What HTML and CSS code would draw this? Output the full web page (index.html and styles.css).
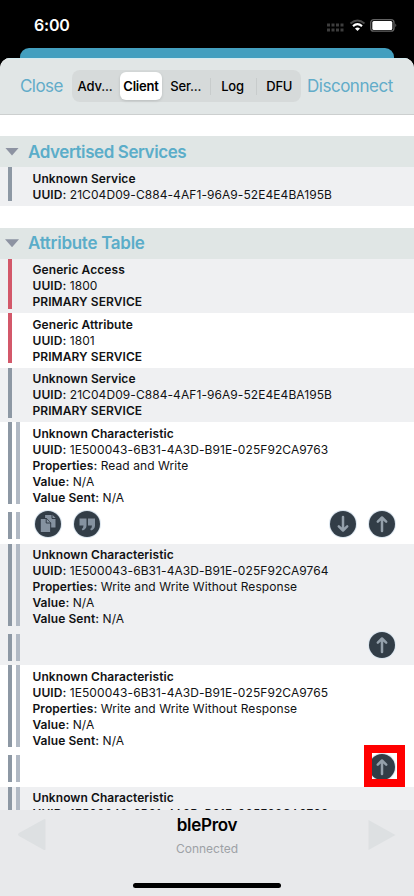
FILE: index.html
```
<!DOCTYPE html>
<html lang="en">
<head>
<meta charset="utf-8">
<meta name="viewport" content="width=device-width, initial-scale=1">
<title>bleProv</title>
<link rel="stylesheet" href="styles.css">
</head>
<body>
<svg class="defs" aria-hidden="true">
  <symbol id="up" viewBox="0 0 26 26"><path d="M13 20V7M8.800 10.700L13 6.500l4.200 4.200"/></symbol>
  <symbol id="down" viewBox="0 0 26 26"><path d="M13 6V19M8.800 15.300L13 19.500l4.200-4.200"/></symbol>
</svg>
<div class="phone">
  <header class="status">
    <span class="time">6:00</span>
    <svg class="indicators" width="72" height="16" viewBox="0 0 72 16">
      <g fill="#3d3d3d"><rect x="0" y="5.500" width="3" height="3"/><rect x="4.500" y="5.500" width="3" height="3"/><rect x="9" y="5.500" width="3" height="3"/><rect x="13.500" y="5.500" width="3" height="3"/><rect x="0" y="10.500" width="3" height="3"/><rect x="4.500" y="10.500" width="3" height="3"/><rect x="9" y="10.500" width="3" height="3"/><rect x="13.500" y="10.500" width="3" height="3"/></g>
      <path d="M23.500 5.500Q30.500-.5 37.500 5.500" fill="none" stroke="#484848" stroke-width="2"/>
      <path d="M26 8.100Q30.500 4.300 35 8.100" fill="none" stroke="#fff" stroke-width="2.200"/>
      <path d="M28 10.500Q30.500 8.500 33 10.500L30.500 13.100Z" fill="#fff"/>
      <rect x="43.700" y="1.700" width="23.300" height="11.500" rx="3" fill="none" stroke="#626262" stroke-width="1.300"/>
      <rect x="45.300" y="3" width="20" height="9" rx="1.500" fill="#fff"/>
      <path d="M68.300 5.500q2 1.800 0 3.500z" fill="#626262"/>
    </svg>
  </header>
  <div class="behind"></div>
  <main class="sheet">
    <nav class="toolbar">
      <span class="link close">Close</span>
      <div class="segments">
        <span class="first">Adv...</span><span class="active">Client</span><span>Ser...</span><span class="divided">Log</span><span class="divided last">DFU</span>
      </div>
      <span class="link disconnect">Disconnect</span>
    </nav>
    <div class="list">
      <h2 class="advertised"><i></i><span>Advertised Services</span></h2>
      <section class="row ad tint"><div class="bars"><i></i></div><div class="text"><p><b>Unknown Service</b></p><p><b>UUID:</b> 21C04D09-C884-4AF1-96A9-52E4E4BA195B</p></div></section>
      <h2 class="attributes"><i></i><span>Attribute Table</span></h2>
      <section class="row service tint red"><div class="bars"><i></i></div><div class="text"><p><b>Generic Access</b></p><p><b>UUID:</b> 1800</p><p><b>PRIMARY SERVICE</b></p></div></section>
      <section class="row service red"><div class="bars"><i></i></div><div class="text"><p><b>Generic Attribute</b></p><p><b>UUID:</b> 1801</p><p><b>PRIMARY SERVICE</b></p></div></section>
      <section class="row service tint"><div class="bars"><i></i></div><div class="text"><p><b>Unknown Service</b></p><p><b>UUID:</b> 21C04D09-C884-4AF1-96A9-52E4E4BA195B</p><p><b>PRIMARY SERVICE</b></p></div></section>
      <section class="row char"><div class="bars"><i></i><i></i><i></i><i></i></div>
        <div class="text"><p><b>Unknown Characteristic</b></p><p><b>UUID:</b> 1E500043-6B31-4A3D-B91E-025F92CA9763</p><p><b>Properties:</b> Read and Write</p><p><b>Value:</b> N/A</p><p><b>Value Sent:</b> N/A</p>
          <div class="actions">
            <svg class="btn" viewBox="0 0 26 26"><g class="solid"><path d="M10 3.500h7l4 4V17H10z"/><path d="M5.500 7.500h6.200l4 4.500V21.500H5.500z"/><path d="M17 3.500v4h4M11.200 7.500V12h4.500"/></g></svg>
            <svg class="btn" viewBox="0 0 26 26"><path class="quote" d="M5.500 7.500h7v7q0 3.500-4 5l-.8-1.500Q9.500 17 9.500 14.500h-4zM14 7.500h7v7q0 3.500-4 5l-.8-1.500Q18 17 18 14.500h-4z"/></svg>
            <svg class="btn first-right"><use href="#down"/></svg>
            <svg class="btn"><use href="#up"/></svg>
          </div></div></section>
      <section class="row char tint"><div class="bars"><i></i><i></i><i></i><i></i></div>
        <div class="text"><p><b>Unknown Characteristic</b></p><p><b>UUID:</b> 1E500043-6B31-4A3D-B91E-025F92CA9764</p><p><b>Properties:</b> Write and Write Without Response</p><p><b>Value:</b> N/A</p><p><b>Value Sent:</b> N/A</p>
          <div class="actions"><svg class="btn first-right"><use href="#up"/></svg></div></div></section>
      <section class="row char"><div class="bars"><i></i><i></i><i></i><i></i></div>
        <div class="text"><p><b>Unknown Characteristic</b></p><p><b>UUID:</b> 1E500043-6B31-4A3D-B91E-025F92CA9765</p><p><b>Properties:</b> Write and Write Without Response</p><p><b>Value:</b> N/A</p><p><b>Value Sent:</b> N/A</p>
          <div class="actions"><span class="marked first-right"><svg class="btn"><use href="#up"/></svg></span></div></div></section>
      <section class="row char tint"><div class="bars"><i></i><i></i><i></i><i></i></div>
        <div class="text"><p><b>Unknown Characteristic</b></p><p><b>UUID:</b> 1E500043-6B31-4A3D-B91E-025F92CA9766</p></div></section>
    </div>
    <footer>
      <svg class="arrow" width="30" height="34" viewBox="0 0 30 34"><path d="M28.500 1.500v30q-1 1-2 .3L2 18q-2-1.500 0-3L26.500 1.500q1-.8 2 0z"/></svg>
      <div class="device"><strong>bleProv</strong><span>Connected</span></div>
      <svg class="arrow" width="30" height="34" viewBox="0 0 30 34"><path d="M1.500 2v30L28.500 17z"/></svg>
      <div class="home"></div>
    </footer>
  </main>
</div>
</body>
</html>
```
FILE: styles.css
```
* { box-sizing: border-box; }
body { margin: 0; background: #000; font-family: Inter, "Liberation Sans", sans-serif; color: #111214; }
h2, p { margin: 0; }
.defs { position: absolute; width: 0; height: 0; }
.phone { height: 896px; overflow: hidden; display: flex; flex-direction: column; }
.status { height: 48px; padding: 15px 15px 0 34px; display: flex; justify-content: space-between; color: #fff; }
.time { font-size: 16px; font-weight: 600; line-height: 20px; letter-spacing: -.2px; }
.indicators { margin-top: 3px; }
.behind { height: 10px; margin: 0 20px; background: #439fbf; border-radius: 9px 9px 0 0; }
.sheet { flex: 1; min-height: 0; display: flex; flex-direction: column; background: #fff; border-radius: 10px 10px 0 0; overflow: hidden; }
.toolbar { height: 57px; flex: none; background: #e1e6e6; border-top: 1px solid #d2eaf0; border-bottom: 1px solid #cccfcf; display: grid; grid-template-columns: 52px 229px 1fr; align-items: center; padding: 0 20px 1px; }
.link { color: #62acc9; font-size: 17px; line-height: 22px; white-space: nowrap; letter-spacing: -.48px; }
.close { letter-spacing: -.55px; }
.disconnect { padding-left: 6px; }
.segments { width: 229px; height: 32px; padding: 2px; border-radius: 8px; background: #d6dada; display: grid; grid-template-columns: 46px 42px 47.5px 46px 43.5px; }
.segments span { display: flex; align-items: center; justify-content: center; font-size: 13px; font-weight: 500; color: #000; letter-spacing: -.2px; }
.segments .active { background: #fff; border-radius: 6px; font-weight: 600; box-shadow: 0 1px 3px #0002; }
.segments .divided { background: linear-gradient(#c8cccc, #c8cccc) left center / 1px 17px no-repeat; }
.segments .first { padding-right: 4px; }
.segments .last { padding-left: 4px; }
.list { flex: 1; min-height: 0; padding-top: 21px; overflow: hidden; }
h2 { height: 31px; background: #e0e6e5; color: #5badc9; display: flex; align-items: center; padding-left: 5px; font-size: 17px; font-weight: 600; line-height: 22px; letter-spacing: -.42px; }
h2 i { width: 14px; height: 8px; margin-right: 9px; background: #8d93a2; clip-path: polygon(0 0, 100% 0, 50% 100%); }
.attributes { height: 30.5px; margin-top: 22px; letter-spacing: -.28px; }
.row { display: flex; background: #fff; }
.tint { background: #eff0f2; }
.ad { height: 39px; }
.service { height: 54.5px; }
.char { height: 121.5px; }
.bars { width: 32.500px; flex: none; padding-left: 8px; display: grid; grid-template-columns: 4px 4px; column-gap: 4px; align-content: start; }
.bars i { height: 50px; background: #8d98a4; }
.ad .bars i { height: 34px; }
.red .bars i { background: #d3586a; }
.char .bars { grid-template-rows: 82px 27px; row-gap: 8px; }
.char .bars i { height: auto; }
.char .bars i:nth-child(even) { background: #b1b9c4; }
.text { flex: 1; padding-top: 3.900px; font-size: 12px; line-height: 16px; white-space: nowrap; letter-spacing: .07px; }
.ad .text { padding-top: 4px; }
.text b { font-weight: 600; }
.actions { margin-top: 5px; height: 26px; padding: 0 19px 0 2px; display: flex; align-items: center; gap: 13px; }
.btn { width: 26px; height: 26px; flex: none; display: block; border-radius: 50%; background: #323d47; fill: none; stroke: #94a0ab; stroke-width: 2.500; stroke-linecap: round; stroke-linejoin: round; box-shadow: 0 0 0 1px #dce6ef; }
.btn .solid { fill: #8592a0; stroke: #303a45; stroke-width: 1; }
.btn .quote { fill: #8592a0; stroke: none; }
.first-right { margin-left: auto; }
.marked { width: 41px; height: 42px; margin: -2px -10px 0 auto; border: 8px solid #f00; display: flex; align-items: center; overflow: hidden; }
.marked .btn { margin: 2px 0 0 -3px; }
footer { height: 86px; flex: none; background: #e8e9eb; display: grid; grid-template-columns: 30px 1fr 30px; padding: 0 17px; align-content: start; position: relative; }
.arrow { margin-top: 8px; fill: #dde0e2; }
.device { text-align: center; display: flex; flex-direction: column; }
.device strong { margin-top: 5px; font-size: 17px; font-weight: 600; line-height: 20px; color: #000; letter-spacing: -.3px; }
.device span { margin-top: 6px; font-size: 12px; line-height: 16px; color: #9da1a6; }
.home { position: absolute; left: 133px; bottom: 8px; width: 148px; height: 5px; border-radius: 3px; background: #000; }
```
